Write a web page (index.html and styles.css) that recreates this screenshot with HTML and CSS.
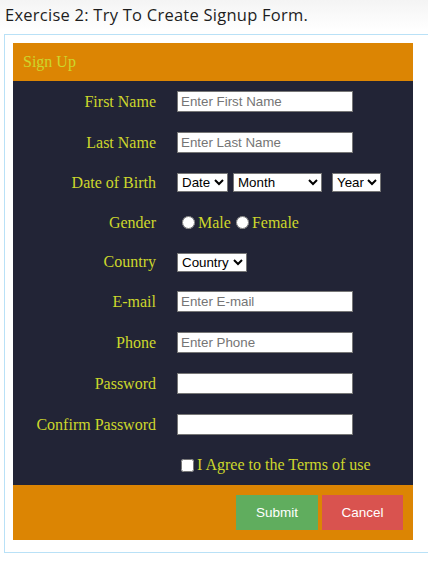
FILE: index.html
```html
<!DOCTYPE html>
<html>
<head>
<meta charset="utf-8">
<link rel="stylesheet" href="styles.css">
</head>
<body>
<h1 class="title">Exercise 2: Try To Create Signup Form.</h1>
<div class="frame">
  <form class="signup">
    <div class="signup-head">Sign Up</div>
    <div class="signup-body">
      <label class="lbl">First Name</label>
      <div class="field"><input class="txt" type="text" placeholder="Enter First Name"></div>

      <label class="lbl">Last Name</label>
      <div class="field"><input class="txt" type="text" placeholder="Enter Last Name"></div>

      <label class="lbl">Date of Birth</label>
      <div class="field">
        <select class="sel sel-date"><option>Date</option></select>
        <select class="sel sel-month"><option>Month</option></select>
        <select class="sel sel-year"><option>Year</option></select>
      </div>

      <label class="lbl">Gender</label>
      <div class="field opt"><input type="radio" name="g" class="radio">Male <input type="radio" name="g" class="radio">Female</div>

      <label class="lbl">Country</label>
      <div class="field"><select class="sel sel-country"><option>Country</option></select></div>

      <label class="lbl">E-mail</label>
      <div class="field"><input class="txt" type="text" placeholder="Enter E-mail"></div>

      <label class="lbl">Phone</label>
      <div class="field"><input class="txt" type="text" placeholder="Enter Phone"></div>

      <label class="lbl">Password</label>
      <div class="field"><input class="txt" type="password"></div>

      <label class="lbl">Confirm Password</label>
      <div class="field"><input class="txt" type="password"></div>

      <span class="lbl"></span>
      <div class="field opt"><input type="checkbox" class="check">I Agree to the Terms of use</div>
    </div>
    <div class="signup-foot">
      <button type="button" class="btn btn-submit">Submit</button>
      <button type="button" class="btn btn-cancel">Cancel</button>
    </div>
  </form>
</div>
</body>
</html>
```

FILE: styles.css
```css
html, body {
  margin: 0;
  padding: 0;
  background: #ffffff;
}
body {
  background: linear-gradient(#f4f4f4 0px, #ffffff 30px) no-repeat;
  height: 561px;
  overflow: hidden;
}
.title {
  margin: 0;
  padding: 4px 0 0 5px;
  height: 30px;
  box-sizing: border-box;
  font-family: "Open Sans", "Noto Sans", sans-serif;
  font-weight: normal;
  font-size: 16.5px;
  letter-spacing: 0.25px;
  line-height: 22px;
  color: #1e1e1e;
}
.frame {
  margin-left: 4px;
  margin-top: 4px;
  width: 415px;
  border: 1px solid #b9e1f7;
  border-right: none;
  padding: 8px 0 12px 8px;
}
.signup {
  width: 400px;
  margin: 0;
  font-family: "Liberation Serif", "Times New Roman", serif;
  font-size: 16px;
  color: #cdd72c;
}
.signup-head {
  background: #dc8503;
  height: 38px;
  box-sizing: border-box;
  padding: 10px 10px;
  line-height: 18px;
}
.signup-body {
  background: #222436;
  display: grid;
  grid-template-columns: 143px 1fr;
  grid-template-rows: 41px 41px 39px 41px 38px 41px 41px 41px 41px 40px;
  column-gap: 21px;
  align-items: center;
}
.lbl {
  text-align: right;
  line-height: 18px;
}
.field {
  display: flex;
  align-items: center;
}
.opt {
  line-height: 18px;
}
.txt {
  box-sizing: border-box;
  width: 176px;
  height: 21px;
  margin: 0;
  padding: 1px 3px;
  border: 1px solid #767676;
  border-radius: 0;
  background: #ffffff;
  font-family: "Liberation Sans", Arial, sans-serif;
  font-size: 13.33px;
  color: #000;
}
.txt::placeholder {
  color: #757575;
}
.sel {
  box-sizing: border-box;
  height: 19px;
  margin: 0;
  font-family: "Liberation Sans", Arial, sans-serif;
  font-size: 13.33px;
  color: #000;
  background: #fff;
  border: 1px solid #767676;
  border-radius: 0;
}
.sel-date { width: 51px; margin-right: 5px; }
.sel-month { width: 89px; margin-right: 10px; }
.sel-year { width: 49px; }
.sel-country { width: 70px; }
.radio {
  margin: 0 3px 0 5px;
  width: 13px;
  height: 13px;
}
.check {
  margin: 0 3px 0 4px;
  width: 13px;
  height: 13px;
}
.signup-foot {
  background: #dc8503;
  padding: 10px;
  text-align: right;
  font-size: 0;
}
.btn {
  font-family: "Liberation Sans", Arial, sans-serif;
  font-size: 13.5px;
  color: #ffffff;
  border: none;
  border-radius: 0;
  padding: 10px 0;
  height: 35px;
  line-height: 15px;
  margin: 0;
  cursor: pointer;
}
.btn-submit { background: #60ad5e; width: 82px; margin-right: 4px; }
.btn-cancel { background: #d9534f; width: 81px; }
```
